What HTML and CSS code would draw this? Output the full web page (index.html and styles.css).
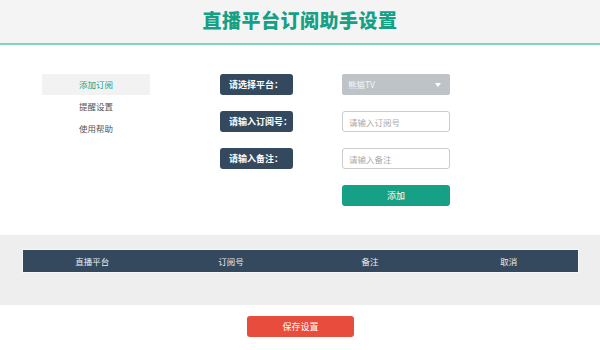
FILE: index.html
```html
<!DOCTYPE html>
<html lang="zh-CN">

<head>
    <meta charset="UTF-8">
    <title>直播平台订阅助手设置</title>
    <link rel="stylesheet" href="styles.css">
</head>

<body>
    <div class="header">
        <h1>直播平台订阅助手设置</h1>
    </div>
    <div class="main">
        <!-- 左侧菜单 -->
        <ul class="menu">
            <li class="active">添加订阅</li>
            <li>提醒设置</li>
            <li>使用帮助</li>
        </ul>
        <!-- 添加订阅表单 -->
        <div class="form">
            <label class="tag">请选择平台：</label>
            <div class="select">熊猫TV<span class="arrow"></span></div>
            <label class="tag">请输入订阅号：</label>
            <input type="text" placeholder="请输入订阅号">
            <label class="tag">请输入备注：</label>
            <input type="text" placeholder="请输入备注">
            <span></span>
            <button class="btn btn-add">添加</button>
        </div>
    </div>
    <div class="list">
        <table>
            <thead>
                <tr>
                    <th>直播平台</th>
                    <th>订阅号</th>
                    <th>备注</th>
                    <th>取消</th>
                </tr>
            </thead>
        </table>
    </div>
    <div class="footer">
        <button class="btn btn-save">保存设置</button>
    </div>
</body>

</html>
```

FILE: styles.css
```css
body {
    margin: 0;
    font-family: "Noto Sans CJK SC", "Noto Sans", sans-serif;
    font-size: 8.5px;
    color: #555;
    background: #fff;
}

.header {
    height: 45px;
    box-sizing: border-box;
    padding-bottom: 5px;
    background: #f4f4f4;
    border-bottom: 2px solid #7ed6bc;
    display: flex;
    align-items: center;
    justify-content: center;
}

.header h1 {
    margin: 0;
    font-size: 19px;
    font-weight: 900;
    color: #16a085;
    letter-spacing: 0.5px;
}

.main {
    height: 190px;
    box-sizing: border-box;
    padding-top: 29px;
    display: flex;
}

/* 左侧菜单 */
.menu {
    list-style: none;
    margin: 0 0 0 42px;
    padding: 0;
    width: 108px;
}

.menu li {
    height: 21px;
    line-height: 21px;
    margin-bottom: 1px;
    text-align: center;
    color: #555;
}

.menu li.active {
    background: #f2f2f2;
    color: #16a085;
}

/* 表单两列对齐 */
.form {
    margin-left: 70px;
    display: grid;
    grid-template-columns: 73px 108px;
    column-gap: 49px;
    row-gap: 16px;
    align-content: start;
}

.tag {
    height: 21px;
    line-height: 21px;
    padding-left: 9px;
    background: #34495e;
    color: #fff;
    font-size: 9px;
    font-weight: bold;
    white-space: nowrap;
    border-radius: 3px;
}

.select {
    position: relative;
    height: 21px;
    line-height: 21px;
    padding-left: 6px;
    background: #bdc3c7;
    color: #f4f5f6;
    border-radius: 2px;
}

.arrow {
    position: absolute;
    right: 9px;
    top: 9px;
    border-left: 3px solid transparent;
    border-right: 3px solid transparent;
    border-top: 4px solid #fff;
}

input {
    box-sizing: border-box;
    height: 21px;
    width: 108px;
    padding: 0 6px;
    border: 1px solid #ccc;
    border-radius: 3px;
    font-family: inherit;
    font-size: 8.5px;
    outline: none;
}

input::placeholder {
    color: #aaa;
}

.btn {
    height: 21px;
    border: none;
    border-radius: 3px;
    color: #fff;
    font-family: inherit;
    font-size: 9px;
    padding: 0;
}

.btn-add {
    width: 108px;
    background: #16a085;
}

/* 订阅列表 */
.list {
    height: 70px;
    box-sizing: border-box;
    background: #eeeeee;
    padding: 14px 21px 0 22px;
}

table {
    width: 100%;
    border-collapse: collapse;
    border: 1px solid #f6f6f6;
}

th {
    width: 25%;
    height: 20px;
    background: #34495e;
    color: #e8ecef;
    font-weight: normal;
    font-size: 8.5px;
}

.footer {
    display: flex;
    justify-content: center;
    padding-top: 11px;
    padding-left: 1px;
}

.btn-save {
    width: 107px;
    background: #e74c3c;
}
```
